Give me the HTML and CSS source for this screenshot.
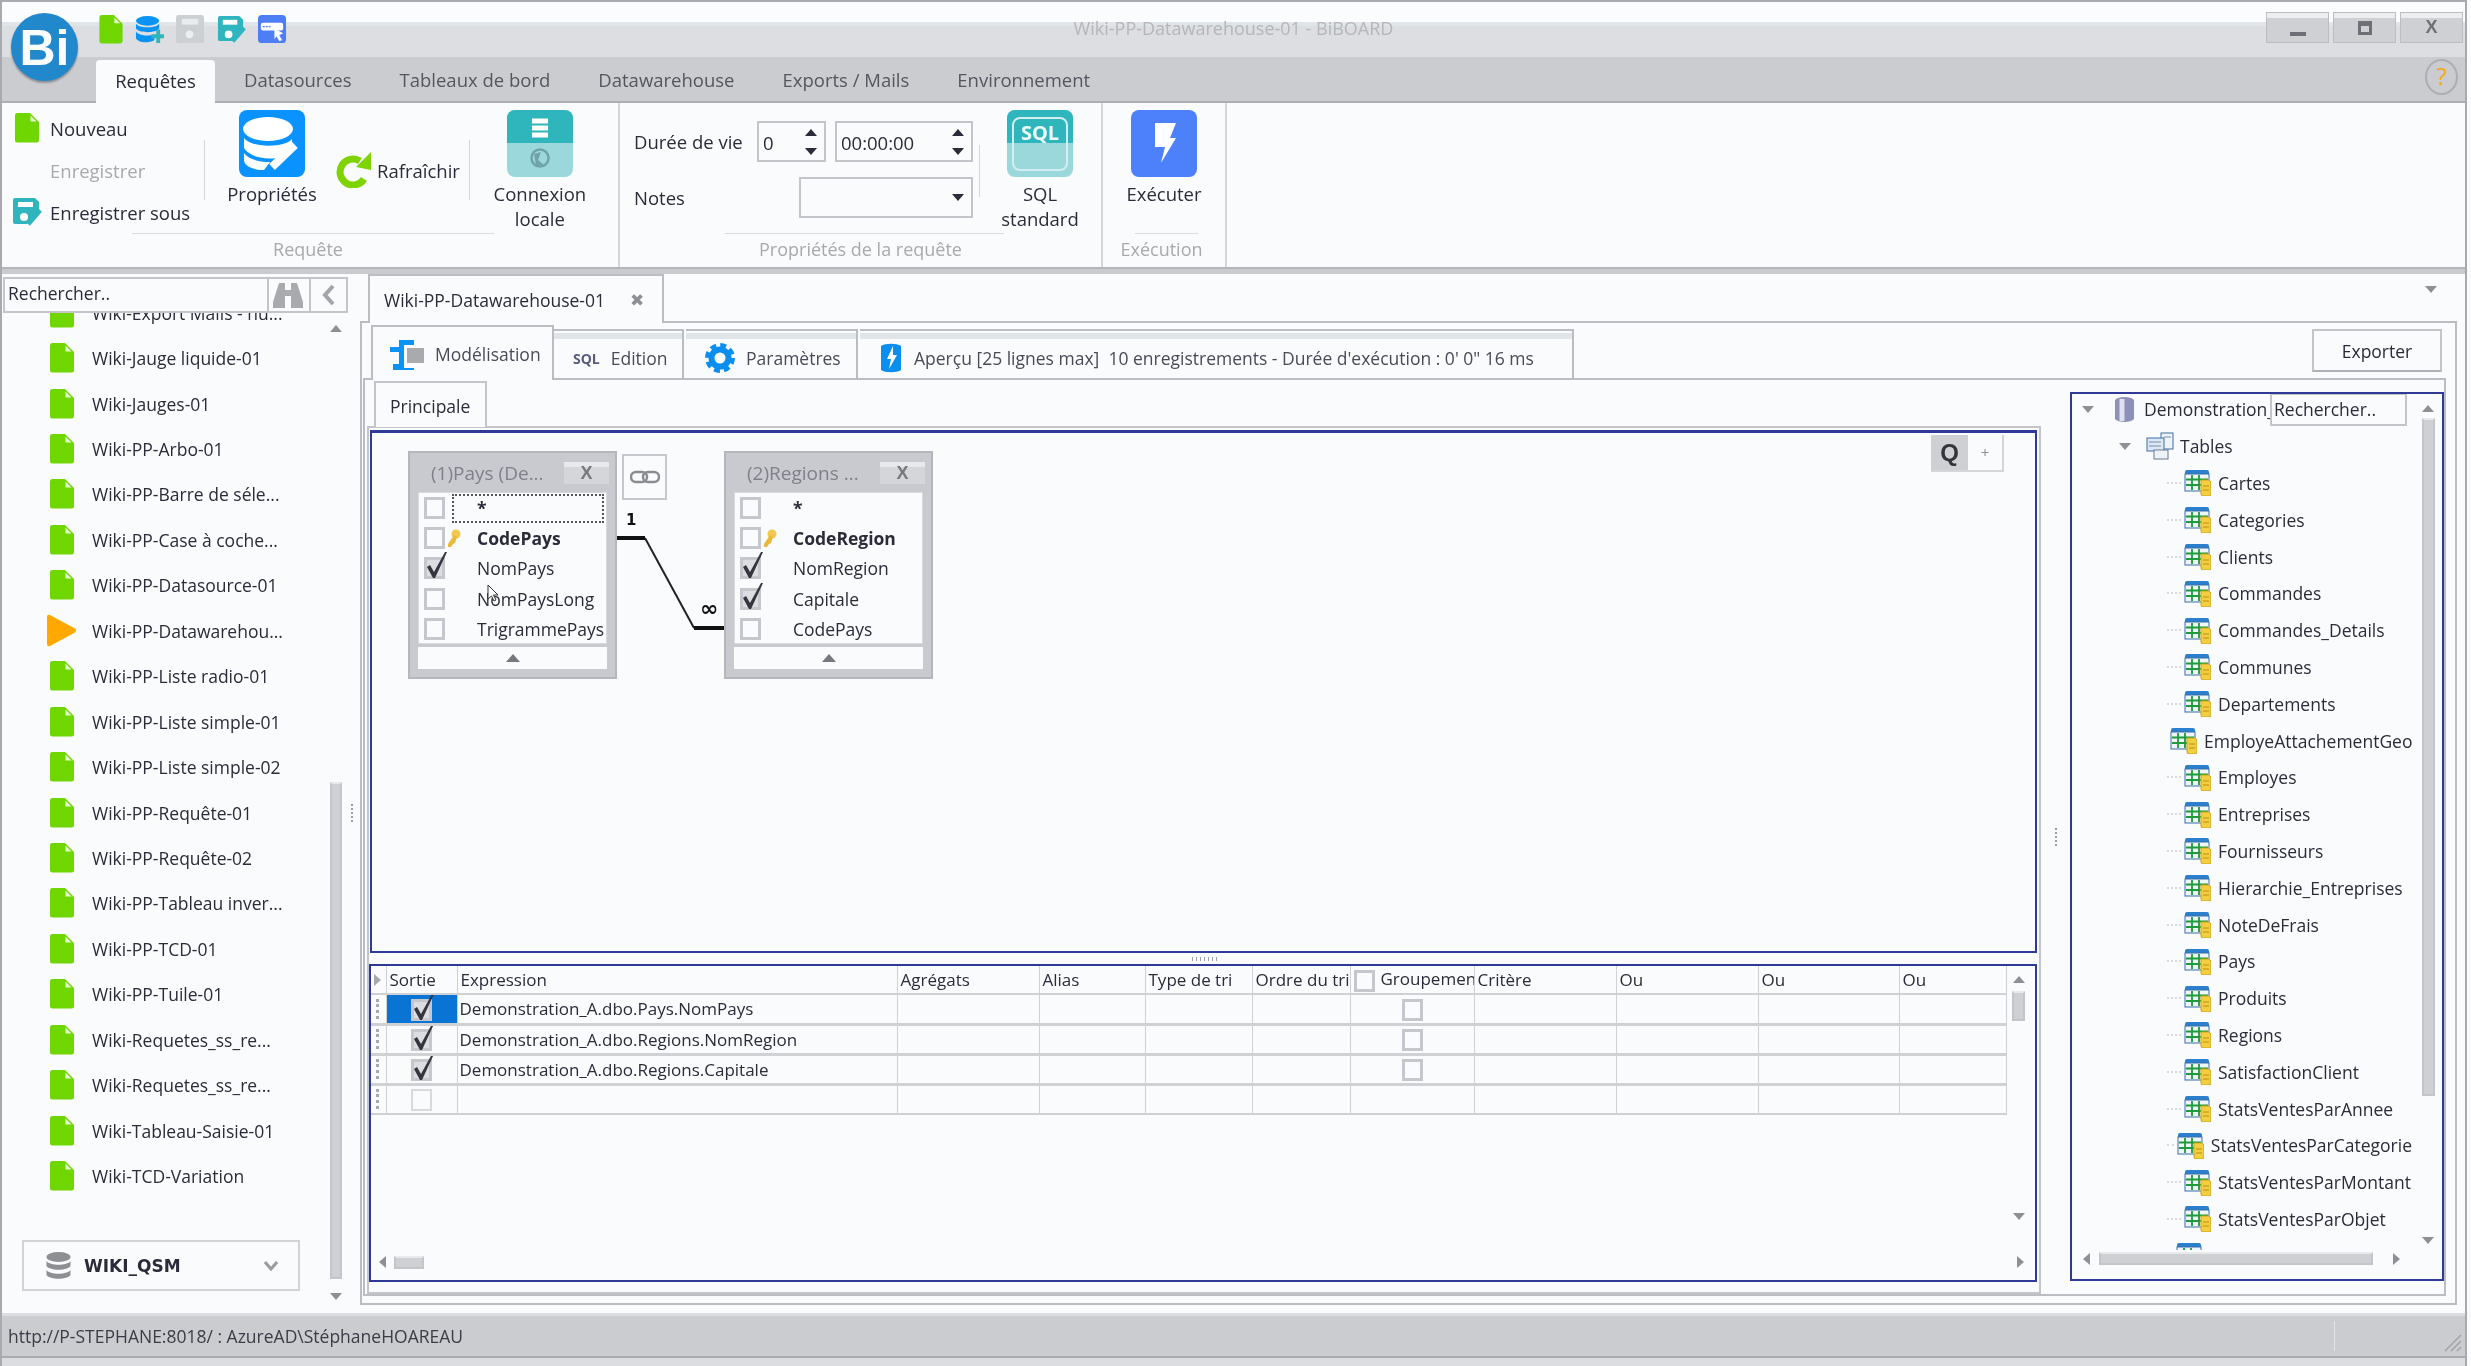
FILE: index.html
```html
<!DOCTYPE html>
<html lang="fr">
<head>
    <meta charset="UTF-8">
    <title>Wiki-PP-Datawarehouse-01 - BiBOARD</title>
    <link rel="stylesheet" href="styles.css">
</head>
<body>
    <svg class="sprite" width="0" height="0">
        <defs>
            <symbol id="doc" viewBox="0 0 24 30">
                <path d="M2 0H15L24 9V27a2.5 2.5 0 0 1-2.500 2.500H2.500A2.500 2.500 0 0 1 0 27V2.500A2.500 2.500 0 0 1 2 0z" fill="#6fd600"/>
                <path d="M15.500 2.500L21.500 8.500H15.500z" fill="#e6f6d2"/>
            </symbol>
            <symbol id="saveas" viewBox="0 0 30 30">
                <path d="M3 1H23L27 5V14L15 27H3a2 2 0 0 1-2-2V3a2 2 0 0 1 2-2z" fill="#2fb5bd"/>
                <rect x="6" y="5" width="15" height="5" fill="#fff"/>
                <circle cx="12" cy="20" r="4" fill="#fff"/>
                <path d="M16 27L28 13" stroke="#2fb5bd" stroke-width="5"/>
            </symbol>
            <symbol id="table" viewBox="0 0 27 27">
                <path d="M1 3a2 2 0 0 1 2-2H23a2 2 0 0 1 2 2V5H1z" fill="#2a7fcf"/>
                <rect x="1" y="5" width="24" height="17" fill="#eef4f8" stroke="#3a6ea8"/>
                <path d="M2 10.500H24M2 16H24M8 6V21M15 6V21" stroke="#1f9a3c" stroke-width="1.800"/>
                <path d="M17 11H25L27 13V25a2 2 0 0 1-2 2H19a2 2 0 0 1-2-2z" fill="#f3cf3f" stroke="#c9a21f"/>
                <path d="M19 17H25M19 21H25" stroke="#b8901a"/>
            </symbol>
            <symbol id="check" viewBox="0 0 24 28">
                <path d="M3 16L6 14L10 21L21 1H23L11 27H9z" fill="#34353f"/>
            </symbol>
            <symbol id="key" viewBox="0 0 15 19">
                <circle cx="10" cy="5" r="4.500" fill="#f2c84e"/>
                <path d="M8 6L2 15V18H5L7 15L9 14L11 8z" fill="#e8b93a"/>
            </symbol>
        </defs>
    </svg>

    <div class="window">
        <header class="titlebar">
            <div class="qat">
                <svg class="qat-ic doc"><use href="#doc"/></svg>
                <svg class="qat-ic" viewBox="0 0 30 30">
                    <ellipse cx="13" cy="6" rx="12" ry="5" fill="#0a93f5"/>
                    <path d="M1 9C4 14 22 14 25 9V14C22 19 4 19 1 14z" fill="#0a93f5"/>
                    <path d="M1 17C4 22 18 22 20 20V26C12 30 3 28 1 24z" fill="#0a93f5"/>
                    <path d="M24 15V29M17 22H30" stroke="#2fb5bd" stroke-width="4"/>
                </svg>
                <svg class="qat-ic" viewBox="0 0 30 30">
                    <rect width="29" height="29" rx="3" fill="#ccd0d3"/>
                    <rect x="6" y="4" width="17" height="6" fill="#e9ebec"/>
                    <circle cx="14" cy="20" r="4" fill="#eceeef"/>
                </svg>
                <svg class="qat-ic"><use href="#saveas"/></svg>
                <svg class="qat-ic" viewBox="0 0 30 30">
                    <rect width="29" height="29" rx="4" fill="#4d7ef5"/>
                    <rect x="3" y="8" width="23" height="8" rx="2" fill="#fff"/>
                    <path d="M5 12H13" stroke="#4d7ef5" stroke-width="1.500" stroke-dasharray="2 1"/>
                    <path d="M17 14L26 19L22 21L25 26L22 27L19 22L17 25z" fill="#fff"/>
                </svg>
            </div>
            <div class="wintitle">Wiki-PP-Datawarehouse-01 - BiBOARD</div>
            <div class="winbtns">
                <div class="winbtn"><span class="glyph-min"></span></div>
                <div class="winbtn"><span class="glyph-max"></span></div>
                <div class="winbtn"><span class="glyph-x">X</span></div>
            </div>
        </header>
        <div class="logo">Bi</div>

        <nav class="tabstrip">
            <div class="tab active">Requêtes</div>
            <div class="tab">Datasources</div>
            <div class="tab">Tableaux de bord</div>
            <div class="tab">Datawarehouse</div>
            <div class="tab">Exports / Mails</div>
            <div class="tab">Environnement</div>
            <div class="help">?</div>
        </nav>

        <section class="ribbon">
            <div class="group g-query">
                <div class="group-body">
                    <div class="small-col">
                        <div class="small-btn"><span class="small-ic"><svg class="ic-doc"><use href="#doc"/></svg></span>Nouveau</div>
                        <div class="small-btn disabled"><span class="small-ic"></span>Enregistrer</div>
                        <div class="small-btn"><span class="small-ic"><svg class="ic-saveas"><use href="#saveas"/></svg></span>Enregistrer sous</div>
                    </div>
                    <div class="rsep"></div>
                    <div class="big-btn w-prop">
                        <svg class="big-ic" viewBox="0 0 66 67">
                            <rect width="66" height="67" rx="8" fill="#0a93ff"/>
                            <ellipse cx="29" cy="19" rx="25" ry="12" fill="#fff"/>
                            <path d="M5 28C12 38 46 38 53 29V35L37 48C25 50 10 46 5 38z" fill="#fff"/>
                            <path d="M5 43C10 50 22 52 31 52L25 60C14 60 5 56 5 50z" fill="#fff"/>
                            <path d="M33 57L56 35" stroke="#fff" stroke-width="8"/>
                        </svg>
                        <span>Propriétés</span>
                    </div>
                    <div class="refresh">
                        <svg class="ic-refresh" viewBox="0 0 36 36">
                            <path d="M24 9A13 13 0 1 0 28 27" fill="none" stroke="#7fd400" stroke-width="7"/>
                            <path d="M20 15L35 0V18z" fill="#7fd400"/>
                        </svg>
                        <span>Rafraîchir</span>
                    </div>
                    <div class="rsep"></div>
                    <div class="big-btn w-conn">
                        <svg class="big-ic" viewBox="0 0 66 67">
                            <rect width="66" height="67" rx="8" fill="#9bd8dc"/>
                            <path d="M8 0H58a8 8 0 0 1 8 8V33H0V8a8 8 0 0 1 8-8z" fill="#2fb6bd"/>
                            <path d="M25 11H41M25 18H41M25 25H41" stroke="#fff" stroke-width="5"/>
                            <circle cx="33" cy="48" r="8.500" fill="none" stroke="#6fa3aa" stroke-width="2.500"/>
                            <path d="M27 44L34 42L31 50L37 55L29 55z" fill="#6fa3aa"/>
                        </svg>
                        <span>Connexion<br>locale</span>
                    </div>
                </div>
                <div class="caption"><span>Requête</span></div>
            </div>

            <div class="group g-props">
                <div class="group-body">
                    <div class="fields">
                        <div class="field-row">
                            <span class="field-label">Durée de vie</span>
                            <div class="spin w-days">0<span class="spin-arrows"><i class="tri-up"></i><i class="tri-down"></i></span></div>
                            <div class="spin w-time">00:00:00<span class="spin-arrows"><i class="tri-up"></i><i class="tri-down"></i></span></div>
                        </div>
                        <div class="field-row">
                            <span class="field-label">Notes</span>
                            <div class="spin w-notes"><span class="spin-arrows"><i class="tri-down"></i></span></div>
                        </div>
                    </div>
                    <div class="rsep short"></div>
                    <div class="big-btn w-sql">
                        <svg class="big-ic" viewBox="0 0 66 67">
                            <rect width="66" height="67" rx="8" fill="#9bd8dc"/>
                            <path d="M8 0H58a8 8 0 0 1 8 8V33H0V8a8 8 0 0 1 8-8z" fill="#2fb6bd"/>
                            <rect x="6" y="8" width="54" height="52" rx="7" fill="none" stroke="#d3eef0" stroke-width="2"/>
                            <text x="33" y="30" text-anchor="middle" class="sql-text">SQL</text>
                        </svg>
                        <span>SQL<br>standard</span>
                    </div>
                </div>
                <div class="caption"><span>Propriétés de la requête</span></div>
            </div>

            <div class="group g-exec">
                <div class="group-body">
                    <div class="big-btn w-exec">
                        <svg class="big-ic" viewBox="0 0 66 67">
                            <rect width="66" height="67" rx="8" fill="#4d80fb"/>
                            <path d="M24 13H45L39 28H45L30 53L34 37H24z" fill="#fff"/>
                        </svg>
                        <span>Exécuter</span>
                    </div>
                </div>
                <div class="caption"><span>Exécution</span></div>
            </div>
        </section>
        <div class="ribbon-foot"></div>

        <div class="workspace">
            <aside class="sidebar">
                <div class="side-search">
                    <div class="side-input">Rechercher..</div>
                    <div class="side-btn binoc">
                        <svg viewBox="0 0 30 26" width="30" height="26">
                            <path d="M6 1H12V8H18V1H24L30 20V26H18V14H12V26H0V20z" fill="#a9aaae"/>
                        </svg>
                    </div>
                    <div class="side-btn collapse">
                        <svg viewBox="0 0 14 22" width="14" height="22">
                            <path d="M11 2L3 11L11 20" fill="none" stroke="#a3a4a9" stroke-width="4"/>
                        </svg>
                    </div>
                </div>
                <div class="side-body">
                    <div class="side-main">
                        <ul class="report-list">
                            <li><svg class="ic-doc"><use href="#doc"/></svg>Wiki-Export Mails - hu...</li>
                            <li><svg class="ic-doc"><use href="#doc"/></svg>Wiki-Jauge liquide-01</li>
                            <li><svg class="ic-doc"><use href="#doc"/></svg>Wiki-Jauges-01</li>
                            <li><svg class="ic-doc"><use href="#doc"/></svg>Wiki-PP-Arbo-01</li>
                            <li><svg class="ic-doc"><use href="#doc"/></svg>Wiki-PP-Barre de séle...</li>
                            <li><svg class="ic-doc"><use href="#doc"/></svg>Wiki-PP-Case à coche...</li>
                            <li><svg class="ic-doc"><use href="#doc"/></svg>Wiki-PP-Datasource-01</li>
                            <li><svg class="ic-play" viewBox="0 0 30 35"><path d="M3 2L28 15.500Q30 17.500 28 19.500L3 33Q0 34 0 31V4Q0 1 3 2z" fill="#ffa800"/></svg>Wiki-PP-Datawarehou...</li>
                            <li><svg class="ic-doc"><use href="#doc"/></svg>Wiki-PP-Liste radio-01</li>
                            <li><svg class="ic-doc"><use href="#doc"/></svg>Wiki-PP-Liste simple-01</li>
                            <li><svg class="ic-doc"><use href="#doc"/></svg>Wiki-PP-Liste simple-02</li>
                            <li><svg class="ic-doc"><use href="#doc"/></svg>Wiki-PP-Requête-01</li>
                            <li><svg class="ic-doc"><use href="#doc"/></svg>Wiki-PP-Requête-02</li>
                            <li><svg class="ic-doc"><use href="#doc"/></svg>Wiki-PP-Tableau inver...</li>
                            <li><svg class="ic-doc"><use href="#doc"/></svg>Wiki-PP-TCD-01</li>
                            <li><svg class="ic-doc"><use href="#doc"/></svg>Wiki-PP-Tuile-01</li>
                            <li><svg class="ic-doc"><use href="#doc"/></svg>Wiki-Requetes_ss_re...</li>
                            <li><svg class="ic-doc"><use href="#doc"/></svg>Wiki-Requetes_ss_re...</li>
                            <li><svg class="ic-doc"><use href="#doc"/></svg>Wiki-Tableau-Saisie-01</li>
                            <li><svg class="ic-doc"><use href="#doc"/></svg>Wiki-TCD-Variation</li>
                        </ul>
                        <div class="db-combo">
                            <svg viewBox="0 0 25 28" width="25" height="28">
                                <ellipse cx="12.500" cy="5" rx="12" ry="5" fill="#8e8f93"/>
                                <path d="M.5 9C4 14 21 14 24.500 9V14C21 19 4 19 .5 14z" fill="#8e8f93"/>
                                <path d="M.5 18C4 23 21 23 24.500 18V23C21 28 4 28 .5 23z" fill="#8e8f93"/>
                            </svg>
                            <b>WIKI_QSM</b>
                            <svg class="db-chevron" viewBox="0 0 14 10" width="14" height="10">
                                <path d="M1 1L7 8L13 1" fill="none" stroke="#9a9ba0" stroke-width="3"/>
                            </svg>
                        </div>
                    </div>
                    <div class="vscroll side-scroll">
                        <i class="tri-up"></i>
                        <span class="vspace"></span>
                        <span class="thumb"></span>
                        <i class="tri-down"></i>
                    </div>
                    <div class="grip"></div>
                </div>
            </aside>

            <main class="main">
                <div class="doc-strip">
                    <div class="doc-tab">Wiki-PP-Datawarehouse-01<span class="doc-close">✖</span></div>
                    <i class="tri-down doc-menu"></i>
                </div>
                <div class="doc-page">
                    <div class="sub-strip">
                        <div class="sub-tab active">
                            <svg class="sub-ic" viewBox="0 0 34 32" width="34" height="32">
                                <path d="M0 9H9V2H24V7H14V30H24V32H3V26H9V14H0z" fill="#0a93f5"/>
                                <rect x="17" y="10" width="17" height="15" fill="#a9aaae"/>
                            </svg>
                            Modélisation
                        </div>
                        <div class="sub-tab"><span class="sql-mini">SQL</span>Edition</div>
                        <div class="sub-tab">
                            <svg class="sub-ic" viewBox="0 0 30 30" width="30" height="30">
                                <circle cx="15" cy="15" r="8.500" fill="none" stroke="#0a8ff0" stroke-width="6"/>
                                <circle cx="15" cy="15" r="12.500" fill="none" stroke="#0a8ff0" stroke-width="5" stroke-dasharray="5.800 4"/>
                            </svg>
                            Paramètres
                        </div>
                        <div class="sub-tab">
                            <svg class="sub-ic" viewBox="0 0 24 30" width="24" height="30">
                                <path d="M2 3C6 0 18 0 22 3V27C18 30 6 30 2 27z" fill="#0a8ff0"/>
                                <path d="M14 3L8 16H12L10 26L18 12H14z" fill="#fff"/>
                            </svg>
                            Aperçu [25 lignes max]&nbsp; 10 enregistrements - Durée d'exécution : 0' 0" 16 ms
                        </div>
                        <button class="export-btn">Exporter</button>
                    </div>

                    <div class="sub-page">
                        <div class="model-col">
                            <div class="page-tab">Principale</div>
                            <div class="page-box">
                                <div class="canvas">
                                    <svg class="links" width="120" height="110" viewBox="0 0 120 110">
                                        <path d="M0 6H28" stroke="#111" stroke-width="4"/>
                                        <path d="M28 6L77 96" stroke="#222" stroke-width="2" fill="none"/>
                                        <path d="M77 96H107" stroke="#111" stroke-width="4"/>
                                    </svg>
                                    <span class="link-label one">1</span>
                                    <span class="link-label many">∞</span>

                                    <div class="link-btn">
                                        <svg viewBox="0 0 30 14" width="30" height="14">
                                            <rect x="1" y="2" width="16" height="10" rx="5" fill="none" stroke="#8b8c91" stroke-width="2.500"/>
                                            <rect x="13" y="2" width="16" height="10" rx="5" fill="none" stroke="#8b8c91" stroke-width="2.500"/>
                                        </svg>
                                    </div>

                                    <div class="tbl-box box-pays">
                                        <div class="tbl-title"><span>(1)Pays (De...</span><span class="tbl-close">X</span></div>
                                        <div class="tbl-rows">
                                            <div class="tbl-row"><span class="cb"></span><span class="tbl-slot"></span><span class="tbl-star focus">*</span></div>
                                            <div class="tbl-row"><span class="cb"></span><span class="tbl-slot"><svg class="ic-key"><use href="#key"/></svg></span><b>CodePays</b></div>
                                            <div class="tbl-row"><span class="cb on"><svg><use href="#check"/></svg></span><span class="tbl-slot"></span>NomPays</div>
                                            <div class="tbl-row"><span class="cb"></span><span class="tbl-slot"></span>NomPaysLong</div>
                                            <div class="tbl-row"><span class="cb"></span><span class="tbl-slot"></span>TrigrammePays</div>
                                        </div>
                                        <div class="tbl-foot"><i class="tri-up"></i></div>
                                    </div>

                                    <div class="tbl-box box-regions">
                                        <div class="tbl-title"><span>(2)Regions ...</span><span class="tbl-close">X</span></div>
                                        <div class="tbl-rows">
                                            <div class="tbl-row"><span class="cb"></span><span class="tbl-slot"></span><span class="tbl-star">*</span></div>
                                            <div class="tbl-row"><span class="cb"></span><span class="tbl-slot"><svg class="ic-key"><use href="#key"/></svg></span><b>CodeRegion</b></div>
                                            <div class="tbl-row"><span class="cb on"><svg><use href="#check"/></svg></span><span class="tbl-slot"></span>NomRegion</div>
                                            <div class="tbl-row"><span class="cb on"><svg><use href="#check"/></svg></span><span class="tbl-slot"></span>Capitale</div>
                                            <div class="tbl-row"><span class="cb"></span><span class="tbl-slot"></span>CodePays</div>
                                        </div>
                                        <div class="tbl-foot"><i class="tri-up"></i></div>
                                    </div>

                                    <svg class="cursor" viewBox="0 0 12 18" width="12" height="18">
                                        <path d="M1 1V15L4.500 12L7 17L9 16L6.500 11H11z" fill="#fff" stroke="#333"/>
                                    </svg>

                                    <div class="zoom-tools"><b>Q</b><span>+</span></div>
                                </div>

                                <div class="h-split"></div>

                                <div class="grid-panel">
                                    <div class="grid-top">
                                        <table class="qgrid">
                                            <colgroup>
                                                <col class="c-ind"><col class="c-out"><col class="c-expr"><col class="c-agg"><col class="c-alias">
                                                <col class="c-type"><col class="c-order"><col class="c-group"><col class="c-or"><col class="c-or"><col class="c-or2"><col class="c-last">
                                            </colgroup>
                                            <tr class="head">
                                                <th class="ind"><i class="tri-right"></i></th><th>Sortie</th><th>Expression</th><th>Agrégats</th><th>Alias</th>
                                                <th>Type de tri</th><th>Ordre du tri</th><th class="th-group"><span class="cb"></span>Groupement</th><th>Critère</th><th>Ou</th><th>Ou</th><th>Ou</th>
                                            </tr>
                                            <tr>
                                                <td class="ind"><i class="dots"></i></td><td class="out selected"><span class="cb on"><svg><use href="#check"/></svg></span></td><td>Demonstration_A.dbo.Pays.NomPays</td><td></td><td></td>
                                                <td></td><td></td><td class="out"><span class="cb"></span></td><td></td><td></td><td></td><td></td>
                                            </tr>
                                            <tr>
                                                <td class="ind"><i class="dots"></i></td><td class="out"><span class="cb on"><svg><use href="#check"/></svg></span></td><td>Demonstration_A.dbo.Regions.NomRegion</td><td></td><td></td>
                                                <td></td><td></td><td class="out"><span class="cb"></span></td><td></td><td></td><td></td><td></td>
                                            </tr>
                                            <tr>
                                                <td class="ind"><i class="dots"></i></td><td class="out"><span class="cb on"><svg><use href="#check"/></svg></span></td><td>Demonstration_A.dbo.Regions.Capitale</td><td></td><td></td>
                                                <td></td><td></td><td class="out"><span class="cb"></span></td><td></td><td></td><td></td><td></td>
                                            </tr>
                                            <tr class="last">
                                                <td class="ind"><i class="dots"></i></td><td class="out"><span class="cb light"></span></td><td></td><td></td><td></td>
                                                <td></td><td></td><td></td><td></td><td></td><td></td><td></td>
                                            </tr>
                                        </table>
                                        <div class="vscroll grid-scroll">
                                            <i class="tri-up"></i>
                                            <span class="thumb"></span>
                                            <span class="vspace"></span>
                                            <i class="tri-down"></i>
                                        </div>
                                    </div>
                                    <div class="hscroll grid-h">
                                        <i class="tri-left"></i>
                                        <span class="thumb"></span>
                                        <i class="tri-right"></i>
                                    </div>
                                </div>
                            </div>
                        </div>

                        <div class="grip"></div>

                        <div class="tree-panel">
                            <div class="tree-search">Rechercher..</div>
                            <div class="tree-top">
                                <div class="tree-body">
                                    <div class="tree-row lvl0">
                                        <i class="tri-down"></i>
                                        <svg class="ic-db" viewBox="0 0 21 27" width="21" height="27">
                                            <path d="M1 4C4 0 17 0 20 4V23C17 27 4 27 1 23z" fill="#8d90b8"/>
                                            <path d="M8 3V25" stroke="#dfe2ee" stroke-width="5"/>
                                        </svg>
                                        Demonstration_A
                                    </div>
                                    <div class="tree-row lvl1">
                                        <i class="tri-down"></i>
                                        <svg class="ic-tables" viewBox="0 0 28 28" width="28" height="28">
                                            <rect x="15" y="1" width="12" height="16" fill="#eef3f8" stroke="#3f6ea8"/>
                                            <rect x="1" y="6" width="17" height="13" fill="#dbe8f4" stroke="#3f6ea8"/>
                                            <rect x="8" y="18" width="14" height="9" fill="#eef3f8" stroke="#6a7a90"/>
                                            <path d="M3 10H15M3 14H15M18 5H25" stroke="#7d8ea5"/>
                                        </svg>
                                        Tables
                                    </div>
                                    <div class="tree-row lvl2"><i class="dotline"></i><svg class="ic-table"><use href="#table"/></svg>Cartes</div>
                                    <div class="tree-row lvl2"><i class="dotline"></i><svg class="ic-table"><use href="#table"/></svg>Categories</div>
                                    <div class="tree-row lvl2"><i class="dotline"></i><svg class="ic-table"><use href="#table"/></svg>Clients</div>
                                    <div class="tree-row lvl2"><i class="dotline"></i><svg class="ic-table"><use href="#table"/></svg>Commandes</div>
                                    <div class="tree-row lvl2"><i class="dotline"></i><svg class="ic-table"><use href="#table"/></svg>Commandes_Details</div>
                                    <div class="tree-row lvl2"><i class="dotline"></i><svg class="ic-table"><use href="#table"/></svg>Communes</div>
                                    <div class="tree-row lvl2"><i class="dotline"></i><svg class="ic-table"><use href="#table"/></svg>Departements</div>
                                    <div class="tree-row lvl2"><i class="dotline"></i><svg class="ic-table"><use href="#table"/></svg>EmployeAttachementGeo</div>
                                    <div class="tree-row lvl2"><i class="dotline"></i><svg class="ic-table"><use href="#table"/></svg>Employes</div>
                                    <div class="tree-row lvl2"><i class="dotline"></i><svg class="ic-table"><use href="#table"/></svg>Entreprises</div>
                                    <div class="tree-row lvl2"><i class="dotline"></i><svg class="ic-table"><use href="#table"/></svg>Fournisseurs</div>
                                    <div class="tree-row lvl2"><i class="dotline"></i><svg class="ic-table"><use href="#table"/></svg>Hierarchie_Entreprises</div>
                                    <div class="tree-row lvl2"><i class="dotline"></i><svg class="ic-table"><use href="#table"/></svg>NoteDeFrais</div>
                                    <div class="tree-row lvl2"><i class="dotline"></i><svg class="ic-table"><use href="#table"/></svg>Pays</div>
                                    <div class="tree-row lvl2"><i class="dotline"></i><svg class="ic-table"><use href="#table"/></svg>Produits</div>
                                    <div class="tree-row lvl2"><i class="dotline"></i><svg class="ic-table"><use href="#table"/></svg>Regions</div>
                                    <div class="tree-row lvl2"><i class="dotline"></i><svg class="ic-table"><use href="#table"/></svg>SatisfactionClient</div>
                                    <div class="tree-row lvl2"><i class="dotline"></i><svg class="ic-table"><use href="#table"/></svg>StatsVentesParAnnee</div>
                                    <div class="tree-row lvl2"><i class="dotline"></i><svg class="ic-table"><use href="#table"/></svg>StatsVentesParCategorie</div>
                                    <div class="tree-row lvl2"><i class="dotline"></i><svg class="ic-table"><use href="#table"/></svg>StatsVentesParMontant</div>
                                    <div class="tree-row lvl2"><i class="dotline"></i><svg class="ic-table"><use href="#table"/></svg>StatsVentesParObjet</div>
                                    <div class="tree-row lvl2"><i class="dotline"></i><svg class="ic-table"><use href="#table"/></svg>StatsVentesParTrimestre</div>
                                </div>
                                <div class="vscroll tree-scroll">
                                    <i class="tri-up"></i>
                                    <span class="thumb"></span>
                                    <span class="vspace"></span>
                                    <i class="tri-down"></i>
                                </div>
                            </div>
                            <div class="hscroll tree-h">
                                <i class="tri-left"></i>
                                <span class="thumb"></span>
                                <i class="tri-right"></i>
                            </div>
                        </div>
                    </div>
                </div>
            </main>
        </div>

        <footer class="statusbar">
            <span class="status-text">http://P-STEPHANE:8018/ : AzureAD\StéphaneHOAREAU</span>
            <span class="status-sep"></span>
            <svg class="status-grip" viewBox="0 0 20 20" width="20" height="20">
                <path d="M2 18L18 2M8 18L18 8M14 18L18 14" stroke="#a1a2a8" stroke-width="1.500"/>
            </svg>
        </footer>
    </div>
</body>
</html>
```

FILE: styles.css
```css
/* Global styles */
* {
    box-sizing: border-box;
}

html, body {
    margin: 0;
    padding: 0;
    background: #f9fbfc;
    overflow: hidden;
}

.sprite {
    position: absolute;
}

.window {
    position: relative;
    display: flex;
    flex-direction: column;
    width: 2467px;
    height: 1366px;
    border: 2px solid #a9aab0;
    border-bottom: none;
    background: #f9fbfc;
    color: #2b2b3a;
    font-family: "Open Sans", sans-serif;
    font-size: 17.5px;
    filter: blur(0.45px);
}

i {
    display: block;
    font-style: normal;
}

/* Small triangles used by every spin box and scrollbar */
.tri-up, .tri-down, .tri-left, .tri-right {
    width: 0;
    height: 0;
    border-style: solid;
    border-color: transparent;
}

.tri-up {
    border-width: 0 6px 7px;
    border-bottom-color: #8f9096;
}

.tri-down {
    border-width: 7px 6px 0;
    border-top-color: #8f9096;
}

.tri-left {
    border-width: 6px 7px 6px 0;
    border-right-color: #8f9096;
}

.tri-right {
    border-width: 6px 0 6px 7px;
    border-left-color: #8f9096;
}

/* Title bar */
.titlebar {
    display: grid;
    grid-template-columns: 1fr auto 1fr;
    height: 55px;
    flex: none;
    background: linear-gradient(#fafcfd 0, #fafcfd 20px, #dfe5e9 20px, #dfe5e9 24px, #dcdee2 24px);
}

.qat {
    display: flex;
    gap: 12px;
    padding: 13px 0 0 97px;
}

.qat-ic {
    width: 29px;
    height: 29px;
}

.qat-ic.doc {
    width: 24px;
}

.wintitle {
    padding-top: 14px;
    color: #b4b6ba;
    font-size: 18px;
}

.winbtns {
    display: flex;
    justify-content: flex-end;
    gap: 4px;
    padding: 10px 2px 0 0;
}

.winbtn {
    display: flex;
    align-items: center;
    justify-content: center;
    width: 63px;
    height: 31px;
    background: linear-gradient(#eceef0 0, #eceef0 5px, #cfd0d4 5px);
    border: 1px solid #bcbdc2;
}

.glyph-min {
    width: 16px;
    height: 4px;
    margin-top: 13px;
    background: #6f7077;
}

.glyph-max {
    width: 14px;
    height: 14px;
    border: 3px solid #6f7077;
    border-top-width: 5px;
}

.glyph-x {
    color: #6f7077;
    font-family: "Liberation Sans", sans-serif;
    font-size: 18px;
    font-weight: bold;
}

.logo {
    position: absolute;
    left: 9px;
    top: 11px;
    width: 67px;
    height: 68px;
    border-radius: 50%;
    background: #2288cc;
    box-shadow: 0 2px 2px #8d8f94;
    color: #fafcfd;
    font-family: "Liberation Sans", sans-serif;
    font-size: 50px;
    font-weight: bold;
    line-height: 70px;
    text-align: center;
}

/* Ribbon tabs */
.tabstrip {
    display: flex;
    align-items: flex-end;
    height: 46px;
    flex: none;
    padding-left: 94px;
    background: #cbccd0;
    border-bottom: 2px solid #adaeb4;
}

.tab {
    height: 40px;
    padding: 0 24px;
    color: #55565f;
    font-size: 18.5px;
    line-height: 38px;
}

.tab.active {
    width: 119px;
    height: 43px;
    margin-right: 5px;
    margin-bottom: -2px;
    padding: 0;
    background: #f9fbfc;
    border-radius: 4px 4px 0 0;
    color: #2b2b3a;
    line-height: 42px;
    text-align: center;
}

.help {
    width: 33px;
    height: 36px;
    margin: 0 7px 6px auto;
    border: 2px solid #adaeb4;
    border-radius: 50%;
    color: #f5a81c;
    font-size: 24px;
    line-height: 30px;
    text-align: center;
}

/* Ribbon */
.ribbon {
    display: flex;
    height: 164px;
    flex: none;
    font-size: 18.5px;
}

.group {
    display: flex;
    flex-direction: column;
    border-right: 2px solid #d5d6da;
}

.g-query {
    width: 618px;
}

.g-props {
    width: 483px;
}

.g-exec {
    width: 124px;
}

.group-body {
    display: flex;
    height: 130px;
    flex: none;
}

.caption {
    display: flex;
    justify-content: center;
    height: 33px;
    border-top: 1px solid #d8d9dc;
    color: #a8a9ad;
    font-size: 18px;
    line-height: 30px;
    white-space: nowrap;
}

.g-query .caption {
    width: 362px;
    margin-left: 130px;
    padding-right: 10px;
}

.g-props .caption {
    width: 279px;
    margin-left: 105px;
    padding-right: 8px;
}

.g-exec .caption {
    width: 63px;
    margin-left: 32px;
    padding-right: 10px;
}

.small-col {
    width: 202px;
    padding: 4px 0 0 10px;
}

.small-btn {
    display: flex;
    align-items: center;
    height: 42px;
    white-space: nowrap;
}

.small-btn.disabled {
    color: #a8a9ad;
}

.small-ic {
    display: flex;
    justify-content: center;
    width: 30px;
    margin-right: 8px;
}

.ic-doc {
    width: 24px;
    height: 30px;
    flex: none;
}

.ic-saveas {
    width: 30px;
    height: 30px;
}

.rsep {
    width: 1px;
    height: 60px;
    margin-top: 37px;
    background: #d5d6da;
}

.rsep.short {
    height: 52px;
    margin: 42px 0 0 6px;
}

.big-btn {
    display: flex;
    flex-direction: column;
    align-items: center;
    padding-top: 7px;
    line-height: 25px;
    text-align: center;
}

.big-ic {
    width: 66px;
    height: 67px;
    margin-bottom: 4px;
    flex: none;
}

.w-prop {
    width: 120px;
    margin-left: 7px;
}

.w-conn {
    width: 140px;
}

.w-sql {
    width: 120px;
}

.w-exec {
    width: 122px;
}

.sql-text {
    fill: #eafafa;
    font-size: 20px;
    font-weight: bold;
}

.refresh {
    display: flex;
    align-items: center;
    gap: 5px;
    height: 80px;
    margin: 27px 9px 0 4px;
    white-space: nowrap;
}

.ic-refresh {
    width: 36px;
    height: 36px;
    flex: none;
}

.fields {
    display: flex;
    flex-direction: column;
    gap: 15px;
    width: 353px;
    padding: 18px 0 0 14px;
}

.field-row {
    display: flex;
    align-items: center;
    gap: 9px;
}

.field-label {
    flex: 1;
}

.spin {
    position: relative;
    height: 41px;
    padding: 7px 0 0 4px;
    border: 2px solid #c4c5ca;
    background: #f9fbfc;
}

.w-days {
    width: 69px;
}

.w-time {
    width: 138px;
}

.w-notes {
    width: 174px;
}

.spin-arrows {
    position: absolute;
    top: 0;
    right: 7px;
    bottom: 0;
    display: flex;
    flex-direction: column;
    align-items: center;
    justify-content: center;
    gap: 12px;
}

.spin .tri-up {
    border-bottom-color: #2b2b3a;
}

.spin .tri-down {
    border-top-color: #2b2b3a;
}

.ribbon-foot {
    height: 7px;
    flex: none;
    background: #cacbcf;
    border-top: 2px solid #b5b6bb;
}

/* Workspace */
.workspace {
    display: flex;
    height: 1039px;
    flex: none;
}

.sidebar {
    display: flex;
    flex-direction: column;
    width: 358px;
    flex: none;
}

.side-search {
    display: flex;
    width: 345px;
    height: 36px;
    flex: none;
    margin: 3px 0 0 1px;
    border: 2px solid #c4c5ca;
}

.side-input {
    flex: 1;
    padding-left: 3px;
    line-height: 28px;
}

.side-btn {
    display: flex;
    align-items: center;
    justify-content: center;
    height: 100%;
    border-left: 2px solid #c4c5ca;
}

.binoc {
    width: 39px;
}

.collapse {
    width: 37px;
    margin-left: 3px;
}

.side-body {
    display: flex;
    flex: 1;
    min-height: 0;
}

.side-main {
    display: flex;
    flex-direction: column;
    width: 326px;
    flex: none;
}

.report-list {
    flex: 1;
    min-height: 0;
    margin: 0;
    padding: 0;
    list-style: none;
    overflow: hidden;
}

.report-list li {
    display: flex;
    align-items: center;
    height: 45.45px;
    padding-left: 48px;
    white-space: nowrap;
}

.report-list li:first-child {
    margin-top: -23px;
}

.report-list .ic-doc {
    margin-right: 18px;
}

.ic-play {
    width: 30px;
    height: 35px;
    margin: 0 15px 0 -3px;
    flex: none;
}

.db-combo {
    display: flex;
    align-items: center;
    width: 278px;
    height: 51px;
    flex: none;
    margin: 0 0 22px 20px;
    padding: 0 20px 0 22px;
    border: 2px solid #d2d3d7;
}

.db-combo b {
    margin-left: 13px;
    font-family: "DejaVu Sans", sans-serif;
    font-size: 17px;
}

.db-chevron {
    margin-left: auto;
}

.vscroll {
    display: flex;
    flex-direction: column;
    align-items: center;
    flex: none;
}

.vspace {
    display: block;
    flex: 1;
}

.thumb {
    display: block;
    background: #cfd0d4;
    border: 2px solid #c4c5ca;
    border-top-color: #e8e9ec;
}

.side-scroll {
    width: 15px;
    padding-top: 12px;
}

.side-scroll .vspace {
    flex: none;
    height: 450px;
}

.side-scroll .thumb {
    width: 12px;
    height: 497px;
    margin-bottom: 14px;
}

.grip {
    flex: 1;
    align-self: center;
    height: 22px;
    background: radial-gradient(circle, #9a9ba0 1px, transparent 1.5px) center / 4px 4px repeat-y;
}

.main {
    display: flex;
    flex-direction: column;
    width: 2097px;
    flex: none;
}

.doc-strip {
    position: relative;
    display: flex;
    height: 47px;
    flex: none;
    padding-left: 8px;
}

.doc-tab {
    display: flex;
    align-items: center;
    justify-content: space-between;
    width: 296px;
    height: 49px;
    padding: 0 18px 0 14px;
    border: 2px solid #bcbdc2;
    border-bottom: none;
    background: #f9fbfc;
    position: relative;
    z-index: 1;
    white-space: nowrap;
}

.doc-close {
    color: #8e8f94;
    font-size: 17px;
}

.doc-menu {
    position: absolute;
    top: 12px;
    right: 20px;
}

.doc-page {
    display: flex;
    flex-direction: column;
    width: 2097px;
    height: 984px;
    flex: none;
    padding-top: 1px;
    border: 2px solid #bcbdc2;
    border-bottom-width: 2px;
}

.sub-strip {
    display: flex;
    align-items: flex-end;
    height: 54px;
    flex: none;
    padding-left: 9px;
    position: relative;
}

.sub-tab {
    display: flex;
    align-items: center;
    gap: 11px;
    height: 49px;
    padding: 7px 9px 0 19px;
    border: 2px solid #bcbdc2;
    border-bottom: none;
    border-left-width: 0;
    background: linear-gradient(#f9fbfc 0, #f9fbfc 2px, #dfe5e9 2px, #dfe5e9 8px, #f9fbfc 8px);
    color: #4a4a58;
    white-space: nowrap;
}

.sub-tab:nth-child(3) {
    margin-left: 2px;
    width: 172px;
}

.sub-tab:nth-child(2) {
    width: 130px;
}

.sub-tab:nth-child(4) {
    margin-left: 2px;
    width: 714px;
}

.sub-tab.active {
    width: 183px;
    height: 55px;
    margin-bottom: -2px;
    padding: 0 0 0 17px;
    border-left-width: 2px;
    background: #f9fbfc;
    position: relative;
    z-index: 1;
}

.sub-tab:nth-child(4) .sub-ic {
    margin-left: 0;
}

.sql-mini {
    color: #5b5a80;
    font-size: 14px;
    font-weight: bold;
}

.sub-ic {
    flex: none;
}

.export-btn {
    width: 130px;
    height: 43px;
    margin: 0 13px 6px auto;
    border: 2px solid #c4c5ca;
    border-bottom-color: #b0b1b6;
    background: #f9fbfc;
    color: #2b2b3a;
    font-family: inherit;
    font-size: 17.5px;
}

.sub-page {
    display: flex;
    width: 2083px;
    height: 918px;
    flex: none;
    margin-left: 1px;
    border: 2px solid #bcbdc2;
}

.model-col {
    display: flex;
    flex-direction: column;
    width: 1676px;
    flex: none;
}

.page-tab {
    width: 113px;
    height: 46px;
    flex: none;
    margin: 1px 0 -1px 9px;
    padding-left: 14px;
    border: 2px solid #c4c5ca;
    border-bottom: none;
    background: #f9fbfc;
    line-height: 46px;
    position: relative;
    z-index: 1;
}

.page-box {
    display: flex;
    flex-direction: column;
    width: 1674px;
    flex: 1;
    min-height: 0;
    margin-left: 2px;
    padding: 2px 1px 0;
    border: 2px solid #c4c5ca;
}

/* Diagram canvas */
.canvas {
    position: relative;
    width: 1667px;
    height: 523px;
    flex: none;
    border: 2px solid #2e3a96;
    border-top-width: 3px;
    overflow: hidden;
}

.links {
    position: absolute;
    left: 245px;
    top: 99px;
}

.link-label {
    position: absolute;
    color: #111;
    font-family: "DejaVu Sans", sans-serif;
    font-weight: bold;
}

.link-label.one {
    left: 254px;
    top: 78px;
    font-size: 15px;
}

.link-label.many {
    left: 328px;
    top: 163px;
    font-size: 22px;
}

.link-btn {
    position: absolute;
    left: 250px;
    top: 21px;
    display: flex;
    align-items: center;
    justify-content: center;
    width: 45px;
    height: 46px;
    border: 2px solid #c6c7cc;
    outline: 2px solid #f9fbfc;
}

.tbl-box {
    position: absolute;
    top: 18px;
    width: 209px;
    height: 228px;
    padding: 0 8px;
    border: 2px solid #b6b7bc;
    background: #c9cacf;
}

.box-pays {
    left: 36px;
}

.box-regions {
    left: 352px;
}

.tbl-title {
    display: flex;
    align-items: center;
    justify-content: space-between;
    height: 39px;
    padding-left: 13px;
    color: #80808c;
    font-size: 19px;
    white-space: nowrap;
}

.tbl-close {
    width: 45px;
    height: 22px;
    margin-right: -2px;
    background: linear-gradient(#e8e9ec 0, #e8e9ec 5px, #d5d6da 5px);
    color: #77787e;
    font-family: "Liberation Sans", sans-serif;
    font-size: 18px;
    font-weight: bold;
    line-height: 22px;
    text-align: center;
}

.tbl-rows {
    height: 152px;
    background: #f9fbfc;
    border: 1px solid #d8d9dc;
    overflow: hidden;
}

.tbl-row {
    display: flex;
    align-items: center;
    height: 30.2px;
    padding-left: 5px;
    white-space: nowrap;
}

.tbl-slot {
    display: flex;
    width: 32px;
    flex: none;
}

.ic-key {
    width: 15px;
    height: 19px;
    margin-left: 1px;
}

.tbl-star {
    flex: 1;
    height: 29px;
    margin: 0 2px 0 -25px;
    padding-left: 25px;
    font-weight: bold;
    line-height: 29px;
}

.tbl-star.focus {
    outline: 2px dotted #555;
    outline-offset: -2px;
}

.tbl-foot {
    display: flex;
    align-items: center;
    justify-content: center;
    height: 22px;
    margin-top: 3px;
    background: #f9fbfc;
}

.tbl-foot .tri-up {
    border-width: 0 7px 8px;
    border-bottom-color: #77787e;
}

.cb {
    position: relative;
    display: inline-block;
    width: 21px;
    height: 22px;
    flex: none;
    border: 3px solid #c6c7cc;
    background: #f9fbfc;
    vertical-align: middle;
}

.cb.on {
    background: #dcdde1;
}

.cb.light {
    border-width: 2px;
    border-color: #d8d9dc;
}

.cb svg {
    position: absolute;
    left: -3px;
    top: -9px;
    width: 24px;
    height: 28px;
}

.cursor {
    position: absolute;
    left: 115px;
    top: 151px;
}

.zoom-tools {
    position: absolute;
    right: 31px;
    top: 2px;
    display: flex;
    height: 37px;
    border-bottom: 2px solid #d5d6da;
    border-right: 2px solid #d5d6da;
}

.zoom-tools b {
    width: 37px;
    background: #cfd0d4;
    color: #33343c;
    font-family: "Liberation Sans", sans-serif;
    font-size: 24px;
    line-height: 35px;
    text-align: center;
}

.zoom-tools span {
    width: 34px;
    color: #8e8f94;
    font-size: 15px;
    line-height: 35px;
    text-align: center;
}

.h-split {
    height: 11px;
    flex: none;
    background: repeating-linear-gradient(90deg, #a0a1a6 0 1px, transparent 1px 4px) center / 25px 4px no-repeat;
}

/* Query grid */
.grid-panel {
    display: flex;
    flex-direction: column;
    width: 1668px;
    height: 318px;
    flex: none;
    margin-left: -1px;
    border: 2px solid #2e3a96;
}

.grid-top {
    display: flex;
    flex: 1;
    min-height: 0;
}

.qgrid {
    width: 1635px;
    height: 148px;
    flex: none;
    border-collapse: collapse;
    table-layout: fixed;
    font-size: 17px;
}

.c-ind { width: 15px; }
.c-out { width: 71px; }
.c-expr { width: 440px; }
.c-agg { width: 142px; }
.c-alias { width: 106px; }
.c-type { width: 107px; }
.c-order { width: 98px; }
.c-group { width: 124px; }
.c-or { width: 142px; }
.c-or2 { width: 141px; }
.c-last { width: 107px; }

.qgrid th, .qgrid td {
    padding: 0 0 0 2px;
    border-right: 1px solid #d0d1d5;
    border-bottom: 3px solid #d0d1d5;
    font-weight: normal;
    text-align: left;
    white-space: nowrap;
    overflow: hidden;
}

.qgrid .head {
    height: 28px;
}

.qgrid .head th {
    border-bottom-width: 2px;
    padding-left: 3px;
}

.qgrid tr {
    height: 30px;
}

.qgrid .last td {
    border-bottom-width: 2px;
}

.qgrid td.out {
    padding: 0;
    text-align: center;
}

.qgrid td.selected {
    background: #0a74d4;
}

.qgrid .ind {
    padding: 0 0 0 3px;
}

.qgrid th.ind .tri-right {
    border-left-color: #a8a9ae;
}

.dots {
    width: 0;
    height: 20px;
    margin-left: 2px;
    border-left: 3px dotted #a8a9ae;
}

.th-group .cb {
    margin-right: 6px;
}

.grid-scroll {
    width: 14px;
    margin-left: 5px;
    padding: 10px 0 30px;
}

.grid-scroll .thumb {
    width: 13px;
    height: 30px;
    margin-top: 8px;
}

.hscroll {
    display: flex;
    align-items: center;
    flex: none;
}

.grid-h {
    height: 30px;
    padding: 0 11px 6px 8px;
}

.grid-h .thumb {
    width: 30px;
    height: 13px;
    margin-left: 8px;
}

.grid-h .tri-right {
    margin-left: auto;
}

/* Object tree */
.tree-panel {
    position: relative;
    display: flex;
    flex-direction: column;
    width: 374px;
    height: 889px;
    flex: none;
    margin-top: 12px;
    border: 2px solid #2e3a96;
}

.tree-search {
    position: absolute;
    left: 198px;
    top: 0;
    z-index: 1;
    width: 137px;
    height: 32px;
    padding-left: 2px;
    border: 2px solid #c4c5ca;
    border-top-width: 1px;
    background: #f9fbfc;
    line-height: 28px;
}

.tree-top {
    display: flex;
    height: 856px;
    flex: none;
}

.tree-body {
    width: 340px;
    flex: none;
    overflow: hidden;
}

.tree-row {
    display: flex;
    align-items: center;
    height: 36.8px;
    white-space: nowrap;
}

.tree-row.lvl0 {
    margin-top: -3px;
    padding-left: 10px;
}

.lvl0 .tri-down {
    margin-right: 20px;
}

.lvl0 .ic-db {
    margin-right: 9px;
}

.tree-row.lvl1 {
    padding-left: 47px;
}

.lvl1 .tri-down {
    margin-right: 15px;
}

.lvl1 .ic-tables {
    margin-right: 6px;
}

.tree-row.lvl2 {
    padding-left: 95px;
}

.dotline {
    width: 14px;
    margin-right: 3px;
    border-top: 2px dotted #d8d9dc;
}

.ic-table {
    width: 27px;
    height: 27px;
    margin-right: 7px;
    flex: none;
}

.tree-scroll {
    width: 14px;
    margin-left: 9px;
    padding: 11px 0 6px;
}

.tree-scroll .thumb {
    width: 13px;
    height: 678px;
    margin-top: 6px;
}

.tree-h {
    padding: 2px 0 0 11px;
}

.tree-h .thumb {
    width: 274px;
    height: 13px;
    margin: 0 20px 0 9px;
}

/* Status bar */
.statusbar {
    display: flex;
    align-items: center;
    flex: 1;
    min-height: 0;
    padding: 0 2px 8px 6px;
    background: linear-gradient(#dcdde1 0, #dcdde1 3px, #cbccd0 3px, #cbccd0 43px, #a9abb0 43px, #a9abb0 45px, #dcdde1 45px);
    color: #3c3c48;
}

.status-sep {
    width: 1px;
    height: 30px;
    margin-left: auto;
    background: #e4e5e8;
}

.status-grip {
    margin: 14px 0 0 108px;
}
```
